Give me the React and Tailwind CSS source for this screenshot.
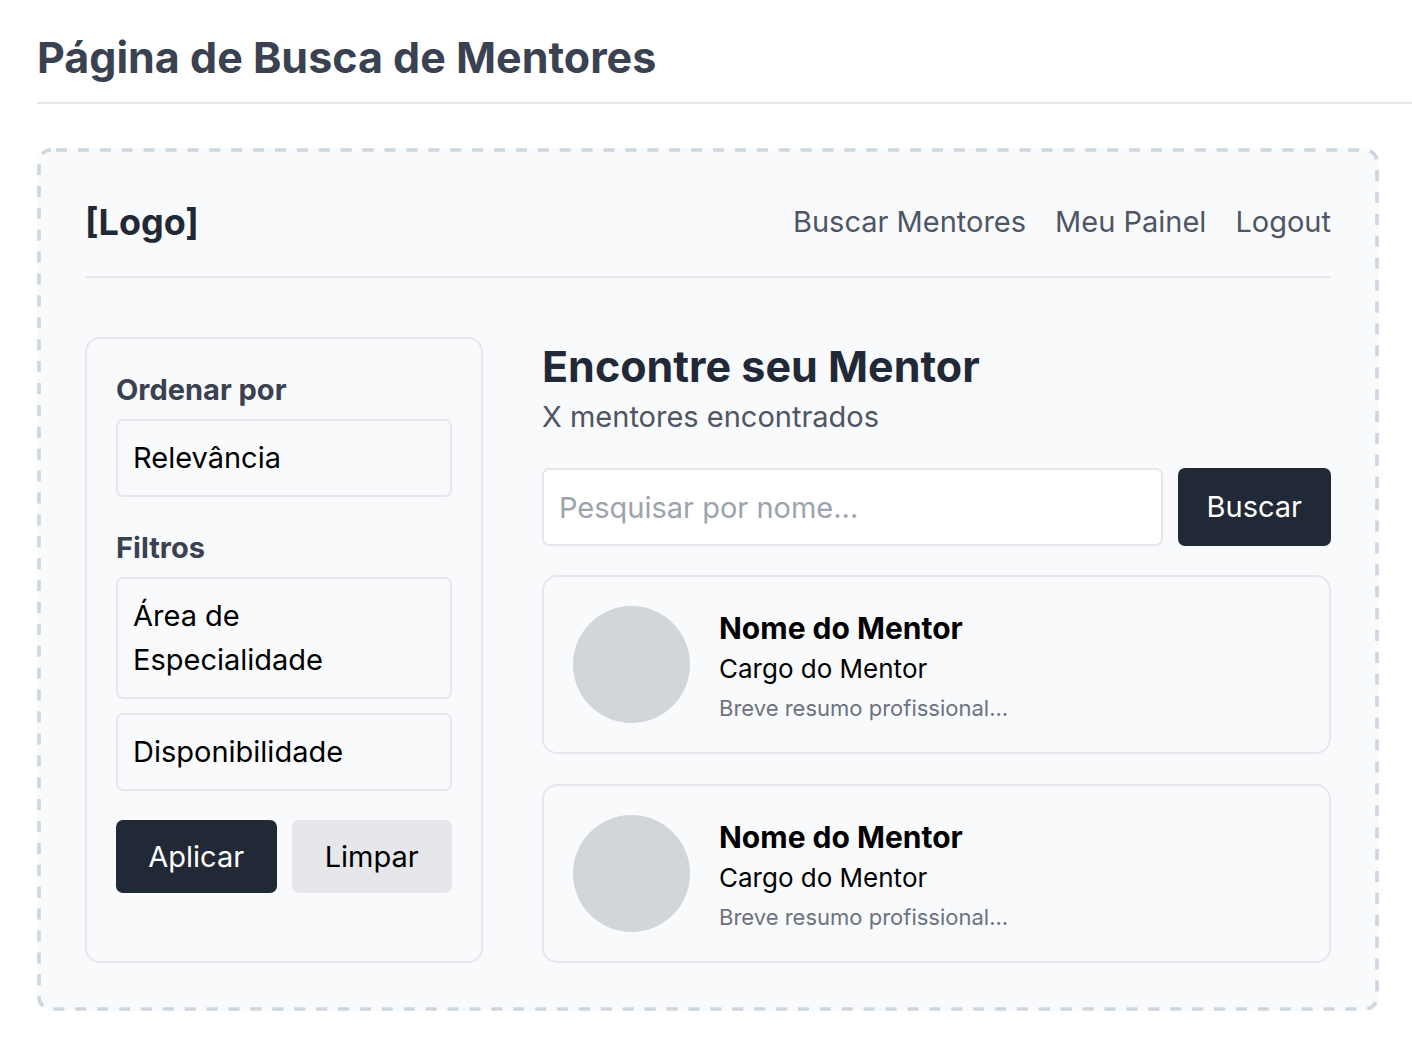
function Mentor() {
  return (
    <article className="flex items-center gap-[29px] rounded-[15px] border-2 border-[#e5e7eb] p-[29px]">
      <div className="size-[117px] shrink-0 rounded-full bg-[#d2d5da]" />
      <div>
        <h3 className="text-[30px] leading-[44px] font-bold text-black">Nome do Mentor</h3>
        <p className="text-[26px] leading-[37px] text-black">Cargo do Mentor</p>
        <p className="mt-[7px] text-[22px] leading-[29px] text-[#6c7280]">Breve resumo profissional...</p>
      </div>
    </article>
  );
}

function Option({ children }) {
  return (
    <button type="button" className="block w-full rounded-[7px] border-2 border-[#e5e7eb] p-[15px] text-left">
      {children}
    </button>
  );
}

/* Dashed outline whose dashes and gaps have the same length. */
function DashedOutline() {
  return (
    <svg aria-hidden="true" className="pointer-events-none absolute inset-0 size-full">
      <rect
        className="h-[calc(100%-4px)] w-[calc(100%-4px)] fill-none stroke-[#ced6e0]"
        x="2"
        y="2"
        rx="12"
        strokeWidth="3.7"
        strokeDasharray="11 10.9"
        strokeDashoffset="-5"
      />
    </svg>
  );
}

export default function App() {
  return (
    <div className="bg-white pt-[27px] pb-[27px] pl-[37px] font-['Inter',sans-serif] text-black">
      <h1 className="border-b-2 border-[#e5e7eb] pb-[15px] text-[43px] leading-[60px] font-bold text-[#3a4150]">Página de Busca de Mentores</h1>
      <main className="relative mt-11 mr-[33px] rounded-[15px] bg-[#f9fafc] p-12">
        <DashedOutline />
        <header className="flex items-center justify-between border-b-2 border-[#e5e7eb] pb-7">
          <div className="text-[36px] leading-[52px] font-bold text-[#222936]">[Logo]</div>
          <nav className="flex gap-[29px] text-[29px] leading-[44px] text-[#4e5564]">
            <a href="#buscar">Buscar Mentores</a>
            <a href="#painel">Meu Painel</a>
            <a href="#logout">Logout</a>
          </nav>
        </header>
        <div className="mt-[59px] flex gap-[59px]">
          <aside className="w-[398px] shrink-0 rounded-[15px] border-2 border-[#e5e7eb] p-[29px] text-[29px] leading-[44px]">
            <h2 className="mb-[7px] font-bold text-[#3a4150]">Ordenar por</h2>
            <Option>Relevância</Option>
            <h2 className="mt-[29px] mb-[7px] font-bold text-[#3a4150]">Filtros</h2>
            <div className="grid gap-[14px]">
              <Option>
                Área de
                <br />
                Especialidade
              </Option>
              <Option>Disponibilidade</Option>
            </div>
            <div className="mt-[29px] grid grid-cols-2 gap-[15px]">
              <button type="button" className="h-[73px] rounded-[7px] bg-[#222936] text-white">Aplicar</button>
              <button type="button" className="h-[73px] rounded-[7px] bg-[#e5e7eb]">Limpar</button>
            </div>
          </aside>
          <section className="min-w-0 flex-1">
            <h2 className="text-[43px] leading-[58px] font-bold text-[#222936]">Encontre seu Mentor</h2>
            <p className="text-[29px] leading-[44px] text-[#4e5564]">X mentores encontrados</p>
            <form className="my-[29px] flex gap-[15px] text-[29px] leading-[44px]">
              <input type="text" aria-label="Pesquisar por nome" placeholder="Pesquisar por nome..." className="h-[78px] min-w-0 flex-1 rounded-[7px] border-2 border-[#e5e7eb] bg-white px-[15px] placeholder:text-[#9ca3af]" />
              <button type="button" className="rounded-[7px] bg-[#222936] px-[29px] text-white">Buscar</button>
            </form>
            <div className="grid gap-[30px]">
              <Mentor />
              <Mentor />
            </div>
          </section>
        </div>
      </main>
    </div>
  );
}
